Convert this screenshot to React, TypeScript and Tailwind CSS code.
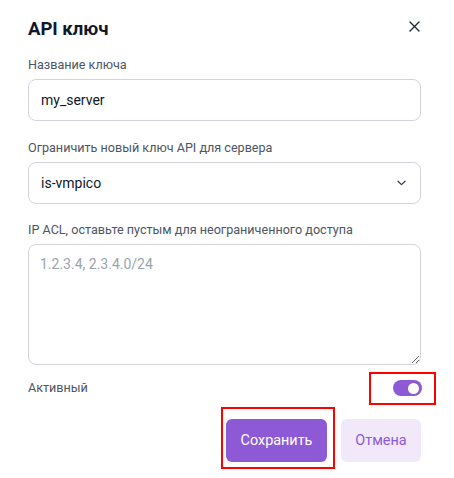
import React from "react";

export default function App() {
  return (
    <div className="relative w-[454px] h-[478px] bg-white overflow-hidden" style={{ fontFamily: "Roboto, 'Noto Sans', sans-serif" }}>
      <div className="ml-[28px] w-[393px] flex flex-col">
        <div className="flex items-center justify-between mt-[17px] h-[24px]">
          <h1 className="text-[18.5px] font-bold text-[#111827] leading-[24px]">API ключ</h1>
          <svg width="11" height="11" viewBox="0 0 11 11" className="mr-[1px] -mt-[6px]">
            <path d="M1 1L10 10M10 1L1 10" stroke="#1f2937" strokeWidth="1.4" strokeLinecap="round" />
          </svg>
        </div>

        <label className="mt-[16px] text-[12.6px] leading-[16px] text-[#4b5563]">Название ключа</label>
        <div className="mt-[6px] h-[42px] rounded-[8px] border border-[#d1d5db] flex items-center pl-[12px] text-[14px] text-[#111827]">
          my_server
        </div>

        <label className="mt-[19px] text-[12.6px] leading-[16px] text-[#4b5563]">Ограничить новый ключ API для сервера</label>
        <div className="mt-[6px] h-[42px] rounded-[8px] border border-[#d1d5db] flex items-center justify-between pl-[12px] pr-[14px] text-[14px] text-[#111827]">
          <span>is-vmpico</span>
          <svg width="9" height="6" viewBox="0 0 9 6">
            <path d="M1 1.2L4.5 4.6L8 1.2" stroke="#374151" strokeWidth="1.3" fill="none" strokeLinecap="round" strokeLinejoin="round" />
          </svg>
        </div>

        <label className="mt-[18px] text-[12.6px] leading-[16px] text-[#4b5563]">IP ACL, оставьте пустым для неограниченного доступа</label>
        <textarea
          className="mt-[6px] h-[121px] rounded-[8px] border border-[#d1d5db] px-[11px] py-[9px] text-[14px] leading-[20px] text-[#111827] placeholder:text-[#9ca3af] outline-none"
          placeholder="1.2.3.4, 2.3.4.0/24"
          style={{ fontFamily: "Roboto, sans-serif" }}
        />

        <div className="mt-[14px] flex items-center justify-between h-[18px]">
          <span className="text-[12.6px] text-[#4b5563]">Активный</span>
          <div className="w-[29px] h-[16px] rounded-full bg-[#8e59d5] flex items-center justify-end pr-[3px] mr-[-1px]">
            <div className="w-[11px] h-[11px] rounded-full bg-white" />
          </div>
        </div>

        <div className="mt-[22px] flex justify-end gap-[14px]">
          <button className="w-[101px] h-[43px] rounded-[6px] bg-[#8e59d5] text-white text-[14.4px]">Сохранить</button>
          <button className="w-[80px] h-[43px] rounded-[6px] bg-[#f1e9fa] text-[#8e59d5] text-[14.4px]">Отмена</button>
        </div>
      </div>

      <div className="absolute left-[221px] top-[407px] w-[114px] h-[62px] border-2 border-[#ff0000] pointer-events-none" />
      <div className="absolute left-[369px] top-[372px] w-[67px] h-[33px] border-2 border-[#ff0000] pointer-events-none" />
    </div>
  );
}
